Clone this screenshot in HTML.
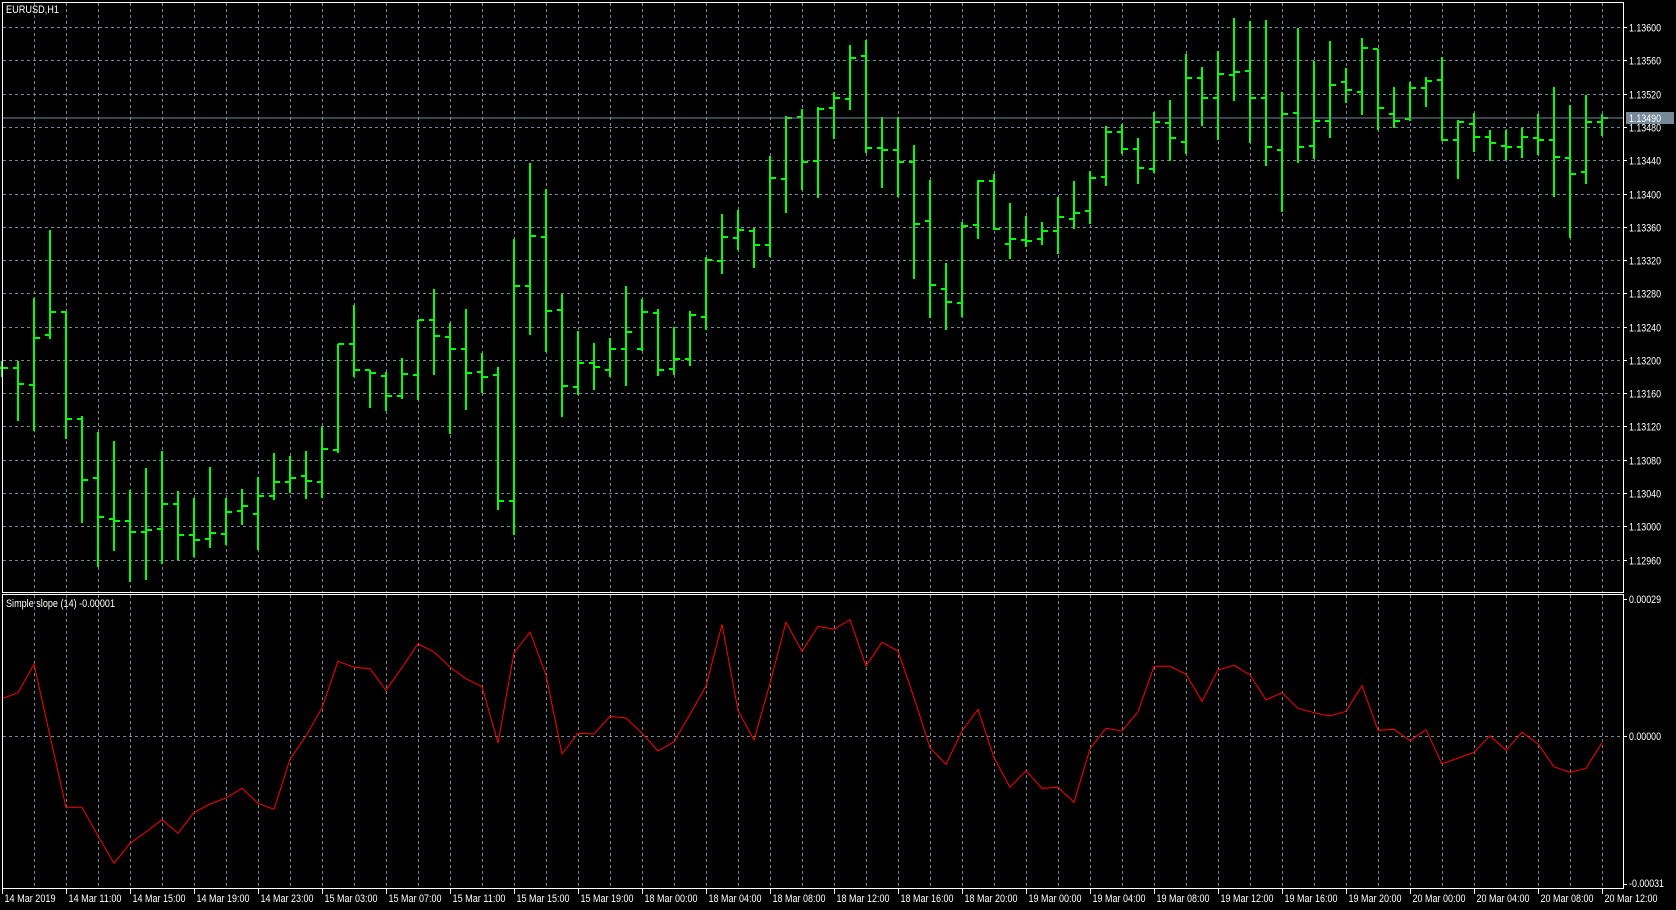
<!DOCTYPE html>
<html><head><meta charset="utf-8">
<style>
html,body{margin:0;padding:0;background:#000;width:1676px;height:910px;overflow:hidden}
svg{display:block}
text{font-family:"Liberation Sans",sans-serif;font-size:11px;fill:#fff}
</style></head><body>
<svg id="s" width="1676" height="910" xmlns="http://www.w3.org/2000/svg">
<rect width="1676" height="910" fill="#000"/>
<g id="grid"></g>
<g id="bars"></g>
<polyline id="ind" fill="none" stroke="#ff0000" stroke-width="1"/>
<line x1="2" y1="118" x2="1623" y2="118" stroke="#778899" stroke-width="1"/>
<rect x="2.5" y="2.5" width="1621" height="590" fill="none" stroke="#fff" stroke-width="1"/>
<rect x="2.5" y="594.5" width="1621" height="294" fill="none" stroke="#fff" stroke-width="1"/>
<text x="6" y="13" textLength="53" lengthAdjust="spacingAndGlyphs">EURUSD,H1</text>
<text x="6" y="607" textLength="109" lengthAdjust="spacingAndGlyphs">Simple slope (14) -0.00001</text>
<g id="ticks"></g>
<g id="pl"></g>
<rect x="1626" y="112" width="48" height="12" fill="#778899"/>
<text x="1629" y="122" textLength="32" lengthAdjust="spacingAndGlyphs">1.13490</text>
<text x="1629" y="603" textLength="32" lengthAdjust="spacingAndGlyphs">0.00029</text>
<text x="1629" y="740" textLength="32" lengthAdjust="spacingAndGlyphs">0.00000</text>
<text x="1629" y="887" textLength="35" lengthAdjust="spacingAndGlyphs">-0.00031</text>
<g id="tl"></g>
</svg>
<script>
var NS="http://www.w3.org/2000/svg";
function L(g,x1,y1,x2,y2,st,w,da){var l=document.createElementNS(NS,"line");l.setAttribute("x1",x1);l.setAttribute("y1",y1);l.setAttribute("x2",x2);l.setAttribute("y2",y2);l.setAttribute("stroke",st);l.setAttribute("stroke-width",w);if(da)l.setAttribute("stroke-dasharray",da);g.appendChild(l);}
function T(g,x,y,s,len){var t=document.createElementNS(NS,"text");t.setAttribute("x",x);t.setAttribute("y",y);t.setAttribute("textLength",len);t.setAttribute("lengthAdjust","spacingAndGlyphs");t.textContent=s;g.appendChild(t);}
var grid=document.getElementById("grid"),ticks=document.getElementById("ticks");
for(var k=1;k<=50;k++){var x=2+32*k+0.5;L(grid,x,3,x,592,"#778899",1,"3,3");L(grid,x,595,x,888,"#778899",1,"3,3");}
var PL=["1.13600","1.13560","1.13520","1.13480","1.13440","1.13400","1.13360","1.13320","1.13280","1.13240","1.13200","1.13160","1.13120","1.13080","1.13040","1.13000","1.12960"];
var pl=document.getElementById("pl");
for(var j=0;j<17;j++){var y=Math.round(27.1+33.28*j)+0.5;L(grid,3,y,1623,y,"#778899",1,"3,3");L(ticks,1623,y,1627,y,"#fff",1);T(pl,1629,y+4,PL[j],32);}
L(grid,3,736.5,1623,736.5,"#778899",1,"3,3");
L(ticks,1623,599.5,1627,599.5,"#fff",1);L(ticks,1623,736.5,1627,736.5,"#fff",1);L(ticks,1623,884.5,1627,884.5,"#fff",1);
var TL=["14 Mar 2019","14 Mar 11:00","14 Mar 15:00","14 Mar 19:00","14 Mar 23:00","15 Mar 03:00","15 Mar 07:00","15 Mar 11:00","15 Mar 15:00","15 Mar 19:00","18 Mar 00:00","18 Mar 04:00","18 Mar 08:00","18 Mar 12:00","18 Mar 16:00","18 Mar 20:00","19 Mar 00:00","19 Mar 04:00","19 Mar 08:00","19 Mar 12:00","19 Mar 16:00","19 Mar 20:00","20 Mar 00:00","20 Mar 04:00","20 Mar 08:00","20 Mar 12:00"];
var tl=document.getElementById("tl");
for(var k=0;k<=25;k++){var x=2+64*k+0.5;L(ticks,x,889,x,894,"#fff",1);T(tl,x+2,902,TL[k],k==0?51:53);}
var B=[[960,1000,978,978],[960,1115,978,1020],[792,1142,1023,898],[612,897,890,829],[829,1163,829,1113],[1104,1387,1113,1275],[1148,1503,1270,1373],[1172,1461,1379,1384],[1302,1543,1384,1414],[1244,1538,1414,1408],[1199,1495,1405,1339],[1305,1486,1339,1421],[1323,1478,1421,1435],[1241,1453,1432,1416],[1323,1446,1419,1360],[1300,1392,1357,1344],[1267,1460,1365,1318],[1204,1325,1318,1282],[1212,1307,1280,1270],[1199,1322,1264,1278],[1134,1320,1280,1193],[913,1200,1195,913],[811,1000,913,983],[983,1081,983,991],[989,1089,998,1052],[951,1058,1052,993],[849,1059,996,849],[768,993,849,892],[857,1150,895,927],[821,1086,927,991],[938,1042,988,1001],[975,1352,996,1331],[635,1418,1331,759],[433,887,759,627],[501,933,629,826],[780,1105,823,1025],[880,1048,1028,964],[912,1033,964,975],[898,999,983,927],[760,1022,927,882],[795,930,927,829],[821,996,831,983],[869,993,980,953],[827,969,953,836],[684,873,842,690],[569,725,693,630],[558,662,632,611],[606,709,613,651],[415,680,651,472],[308,562,475,313],[290,501,311,430],[284,523,429,289],[245,367,287,260],[120,289,262,153],[105,403,148,393],[311,496,393,398],[311,520,398,430],[385,738,430,595],[478,841,587,757],[699,873,767,802],[590,840,805,600],[478,632,597,480],[462,608,480,608],[539,685,648,635],[574,653,637,640],[590,647,635,613],[523,671,613,576],[481,605,581,566],[454,592,560,472],[336,492,470,350],[330,406,350,396],[367,485,396,446],[298,456,448,324],[266,426,328,366],[144,407,377,207],[178,331,207,260],[136,368,260,196],[48,267,199,191],[55,377,188,260],[53,438,260,390],[245,560,398,302],[74,430,300,390],[162,419,387,321],[109,363,321,226],[181,270,219,239],[101,302,244,127],[129,343,129,286],[231,337,304,321],[218,320,316,233],[205,281,233,215],[151,373,212,371],[319,472,373,324],[300,400,329,364],[345,426,363,379],[345,422,387,390],[339,416,390,363],[303,409,366,371],[231,520,371,416],[279,629,419,462],[252,485,456,324],[303,360,324,313]];
var bars=document.getElementById("bars"),f=2.657,G="#00ff00";
for(var i=0;i<B.length;i++){var b=B[i],x=2+16*i;var h=Math.round(b[0]/f),l=Math.round(b[1]/f),o=Math.round(b[2]/f),c=Math.round(b[3]/f);
L(bars,x,h,x,l+1,G,2);L(bars,x-5,o,x,o,G,2);L(bars,x,c,x+6,c,G,2);}
var I=[308,290,205,420,634,634,720,802,742,708,671,712,650,624,606,577,622,640,490,420,335,196,214,218,283,215,143,168,213,248,272,441,170,108,237,474,412,414,361,366,412,465,437,355,270,85,343,432,262,79,166,91,100,71,210,139,165,305,455,505,405,340,485,574,524,577,574,619,458,397,405,347,211,211,235,316,222,208,237,312,290,337,350,360,346,269,403,400,434,401,504,486,469,419,463,409,444,512,529,517,440];
var pts=[];for(var i=0;i<I.length;i++){pts.push((2+16*i)+","+(596+I[i]/3).toFixed(1));}
document.getElementById("ind").setAttribute("points",pts.join(" "));
</script>
</body></html>
